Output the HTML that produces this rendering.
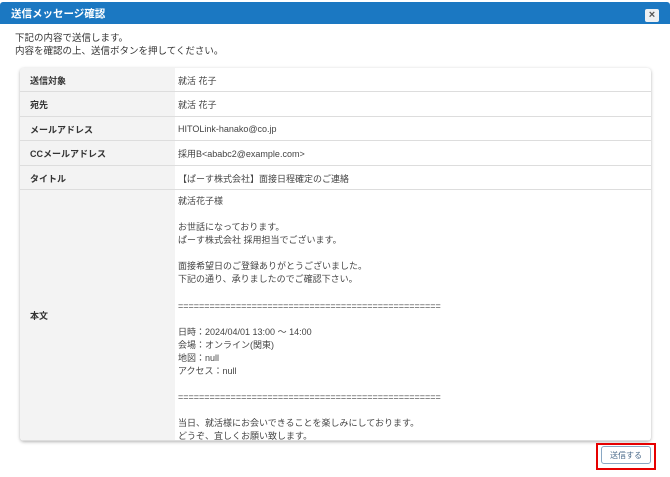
<!DOCTYPE html>
<html><head><meta charset="utf-8"><style>
body{margin:0;width:670px;height:477px;background:#fff;font-family:"Liberation Sans","Noto Sans CJK JP",sans-serif;color:#333;position:relative;overflow:hidden}
.hd{position:absolute;left:0;top:2px;width:670px;height:22px;background:#1b78c2;border-radius:3px 3px 0 0}
.hd span{position:absolute;left:11px;top:4px;color:#fff;font-size:10.5px;font-weight:bold}
.cl{position:absolute;left:645px;top:7px;width:14px;height:13px;background:#eef0f2;border-radius:2px;font-size:11px;line-height:13px;text-align:center;color:#555;font-weight:bold}
.intro{position:absolute;left:15px;top:32px;font-size:9.5px;line-height:13px;color:#333}
.tb{position:absolute;left:20px;top:68px;width:631px;height:373px;border-radius:4px;box-shadow:0 1px 3px rgba(0,0,0,.3);overflow:hidden;background:#fff}
.r{position:absolute;left:0;width:631px;font-size:9px}
.r::after{content:"";position:absolute;left:0;right:0;bottom:0;height:1px;background:#ddd}
.l{position:absolute;left:0;top:0;bottom:0;width:155px;background:#f3f3f3;font-weight:bold;padding-left:10px;box-sizing:border-box;display:flex;align-items:center}
.v{position:absolute;left:158px;top:0;bottom:0;display:flex;align-items:center;color:#444}
.body{position:absolute;left:158px;top:5px;line-height:13.06px;color:#444;white-space:pre}
.btn{position:absolute;left:601px;top:446px;width:50px;height:18px;border:1px solid #8aa8c4;border-radius:3px;font-size:8px;text-align:center;line-height:18px;color:#4a6a8a;box-sizing:border-box}
.red{position:absolute;left:596px;top:443px;width:60px;height:27px;border:2px solid #e60000;box-sizing:border-box}
</style></head><body>
<div class="hd"><span>送信メッセージ確認</span><div class="cl">×</div></div>
<div class="intro">下記の内容で送信します。<br>内容を確認の上、送信ボタンを押してください。</div>
<div class="tb">
<div class="r" style="top:0;height:24px"><div class="l">送信対象</div><div class="v">就活 花子</div></div>
<div class="r" style="top:24px;height:25px"><div class="l">宛先</div><div class="v">就活 花子</div></div>
<div class="r" style="top:49px;height:24px"><div class="l">メールアドレス</div><div class="v">HITOLink-hanako@co.jp</div></div>
<div class="r" style="top:73px;height:25px"><div class="l">CCメールアドレス</div><div class="v">採用B&lt;ababc2@example.com&gt;</div></div>
<div class="r" style="top:98px;height:24px"><div class="l">タイトル</div><div class="v">【ぱーす株式会社】面接日程確定のご連絡</div></div>
<div class="r" style="top:122px;height:251px"><div class="l">本文</div><div class="body">就活花子様

お世話になっております。
ぱーす株式会社 採用担当でございます。

面接希望日のご登録ありがとうございました。
下記の通り、承りましたのでご確認下さい。

==================================================

日時：2024/04/01 13:00 〜 14:00
会場：オンライン(関東)
地図：null
アクセス：null

==================================================

当日、就活様にお会いできることを楽しみにしております。
どうぞ、宜しくお願い致します。</div></div>
</div>
<div class="btn">送信する</div>
<div class="red"></div>
</body></html>
